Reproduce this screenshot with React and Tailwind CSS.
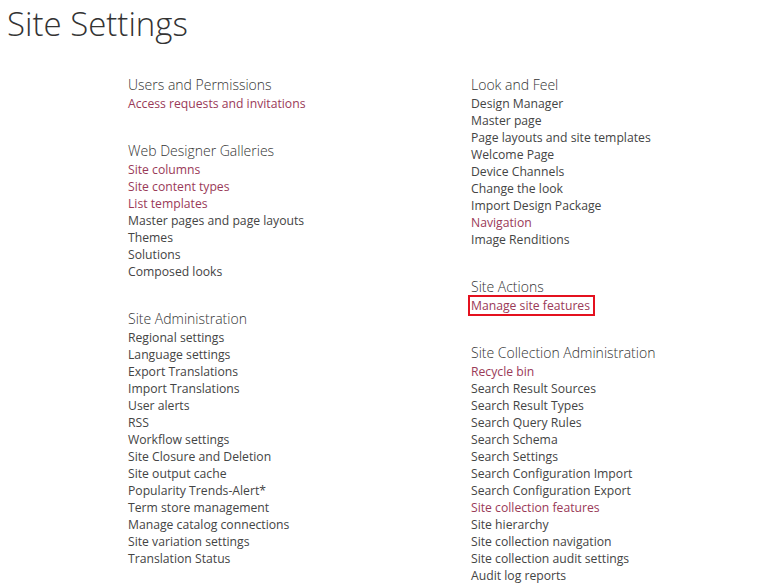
import React from 'react';

const VISITED = 'text-[#9a3a58]';
const PLAIN = 'text-[#444444]';

const left = [
    {
        title: 'Users and Permissions',
        links: [['Access requests and invitations', true]],
    },
    {
        title: 'Web Designer Galleries',
        links: [
            ['Site columns', true],
            ['Site content types', true],
            ['List templates', true],
            ['Master pages and page layouts'],
            ['Themes'],
            ['Solutions'],
            ['Composed looks'],
        ],
    },
    {
        title: 'Site Administration',
        links: [
            ['Regional settings'],
            ['Language settings'],
            ['Export Translations'],
            ['Import Translations'],
            ['User alerts'],
            ['RSS'],
            ['Workflow settings'],
            ['Site Closure and Deletion'],
            ['Site output cache'],
            ['Popularity Trends-Alert*'],
            ['Term store management'],
            ['Manage catalog connections'],
            ['Site variation settings'],
            ['Translation Status'],
        ],
    },
];

const right = [
    {
        title: 'Look and Feel',
        links: [
            ['Design Manager'],
            ['Master page'],
            ['Page layouts and site templates'],
            ['Welcome Page'],
            ['Device Channels'],
            ['Change the look'],
            ['Import Design Package'],
            ['Navigation', true],
            ['Image Renditions'],
        ],
    },
    {
        title: 'Site Actions',
        links: [['Manage site features', true, true]],
    },
    {
        title: 'Site Collection Administration',
        links: [
            ['Recycle bin', true],
            ['Search Result Sources'],
            ['Search Result Types'],
            ['Search Query Rules'],
            ['Search Schema'],
            ['Search Settings'],
            ['Search Configuration Import'],
            ['Search Configuration Export'],
            ['Site collection features', true],
            ['Site hierarchy'],
            ['Site collection navigation'],
            ['Site collection audit settings'],
            ['Audit log reports'],
        ],
    },
];

function Section({ title, links }) {
    return (
        <div className="flex flex-col">
            <h2 className="h-[21px] leading-[21px] text-[14px] font-light text-[#333333]">{title}</h2>
            <ul className="flex flex-col">
                {links.map(([label, visited, boxed]) => (
                    <li key={label} className="h-[17px] leading-[17px]">
                        {boxed ? (
                            <a className={`-ml-[3px] -mt-[3px] inline-block border-2 border-[#e4111f] pl-px pr-[3px] leading-[17px] ${VISITED}`}>
                                {label}
                            </a>
                        ) : (
                            <a className={visited ? VISITED : PLAIN}>{label}</a>
                        )}
                    </li>
                ))}
            </ul>
        </div>
    );
}

function Column({ sections }) {
    return (
        <div className="flex flex-col gap-[28px]">
            {sections.map((s) => (
                <Section key={s.title} {...s} />
            ))}
        </div>
    );
}

export default function App() {
    return (
        <div className="h-[586px] w-[757px] overflow-hidden bg-white font-['Open_Sans','Liberation_Sans',sans-serif] text-[12.2px]">
            <h1 className="pl-[7px] pt-[2px] text-[33px] font-light leading-[44px] text-[#333333]">Site Settings</h1>
            <div className="mt-[28px] grid grid-cols-[343px_1fr] pl-[128px]">
                <Column sections={left} />
                <Column sections={right} />
            </div>
        </div>
    );
}
